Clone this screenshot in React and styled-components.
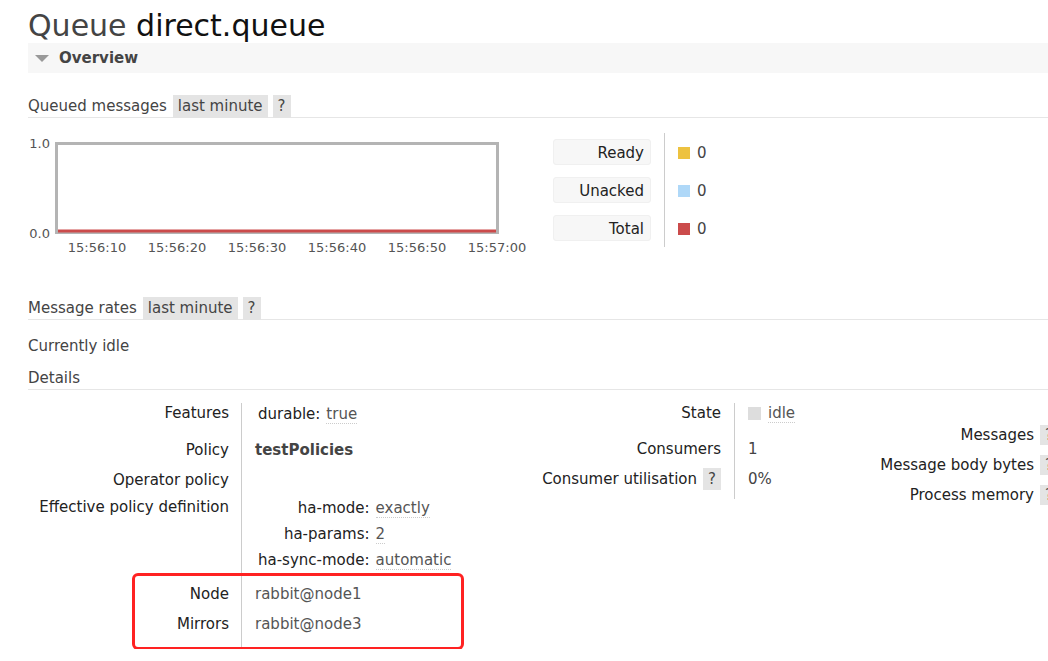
import React from 'react';
import styled, { createGlobalStyle } from 'styled-components';

const Global = createGlobalStyle`
  html, body { margin: 0; padding: 0; background: #fff; overflow: hidden; }
  body {
    font-family: "DejaVu Sans", Verdana, sans-serif;
    font-size: 15px;
    color: #444;
  }
  * { box-sizing: border-box; }
`;

const Page = styled.div`
  padding-left: 28px;
  width: 1048px;
`;

const Title = styled.h1`
  margin: 8px 0 0;
  font-size: 30px;
  font-weight: normal;
  line-height: 35px;
  color: #444;
  white-space: nowrap;
`;

const TitleName = styled.span`
  color: #111;
`;

const SectionBar = styled.div`
  height: 30px;
  background: #f7f7f7;
  display: flex;
  align-items: center;
  gap: 10px;
  padding-left: 7px;
  font-weight: bold;
  color: #444;
`;

const Caret = styled.span`
  width: 0;
  height: 0;
  border-left: 7px solid transparent;
  border-right: 7px solid transparent;
  border-top: 7px solid #999;
`;

const SubHeading = styled.div`
  display: flex;
  align-items: center;
  height: 24px;
  padding-top: 1px;
  border-bottom: 1px solid #e6e6e6;
  margin-top: ${(p) => p.$mt}px;
  color: #444;
  white-space: nowrap;
`;

const Pill = styled.span`
  display: inline-block;
  background: #e4e4e4;
  height: 23px;
  line-height: 23px;
  padding: 0 5px;
  margin-left: ${(p) => p.$ml ?? 5}px;
  color: #444;
`;

const HelpBox = styled.span`
  display: inline-block;
  flex: none;
  background: #e4e4e4;
  height: ${(p) => p.$h ?? 22}px;
  line-height: ${(p) => p.$h ?? 22}px;
  padding: 0 5px;
  margin-left: 6px;
  color: #444;
`;

const ChartRow = styled.div`
  display: flex;
  margin-top: 15px;
  height: 122px;
`;

const ChartGrid = styled.div`
  display: grid;
  grid-template-columns: 27px 480px;
  grid-template-rows: 92px 16px;
  row-gap: 6px;
  margin-top: 9px;
  width: 525px;
  font-size: 13px;
  color: #545454;
`;

const YAxis = styled.div`
  display: flex;
  flex-direction: column;
  justify-content: space-between;
  align-items: flex-end;
  padding-right: 5px;
  margin: -6px 0 -8px;
  line-height: 16px;
`;

const XAxis = styled.div`
  grid-column: 2;
  display: flex;
  margin-left: 2px;
  line-height: 16px;
`;

const Tick = styled.span`
  flex: none;
  width: 80px;
  text-align: center;
`;

const Legend = styled.div`
  display: grid;
  grid-template-columns: 111px auto;
  grid-auto-rows: 38px;
`;

const LegendLabel = styled.div`
  width: 98px;
  height: 26px;
  margin-top: 6px;
  line-height: 26px;
  text-align: right;
  padding-right: 6px;
  background: #f7f7f7;
  border: 1px solid #f0f0f0;
  border-radius: 3px;
  color: #222;
`;

const LegendValue = styled.div`
  border-left: 1px solid #ccc;
  padding-left: 13px;
  display: flex;
  align-items: center;
  gap: 7px;
  padding-top: 2px;
`;

const Swatch = styled.span`
  width: ${(p) => p.$s ?? 12}px;
  height: ${(p) => p.$s ?? 12}px;
  background: ${(p) => p.$c};
  flex: none;
`;

const Plain = styled.div`
  margin-top: ${(p) => p.$mt}px;
  line-height: 20px;
  padding-top: 1px;
  color: #444;
`;

const Tables = styled.div`
  display: flex;
  margin-top: 13px;
  white-space: nowrap;
`;

const DetailTable = styled.div`
  position: relative;
  width: ${(p) => p.$w}px;
  padding-top: ${(p) => p.$pt ?? 0}px;
  flex: none;
`;

const Row = styled.div`
  display: flex;
  align-items: flex-start;
  height: ${(p) => p.$h}px;
`;

const Label = styled.div`
  flex: none;
  width: ${(p) => p.$w}px;
  height: 20px;
  line-height: 20px;
  padding-right: ${(p) => p.$pr ?? 12}px;
  display: flex;
  justify-content: flex-end;
  align-items: center;
  color: #222;
`;

const Value = styled.div`
  flex: 1;
  align-self: stretch;
  border-left: 1px solid #ccc;
  padding-left: 13px;
  line-height: 20px;
  color: ${(p) => p.$c ?? '#444'};
  font-weight: ${(p) => (p.$bold ? 'bold' : 'normal')};
`;

const KV = styled.div`
  display: grid;
  grid-template-columns: auto auto;
  grid-auto-rows: 18px;
  column-gap: 6px;
  row-gap: 8px;
  margin-left: 3px;
  padding-top: 1px;
  justify-content: start;
`;

const KVKey = styled.span`
  text-align: right;
  color: #222;
`;

const Abbr = styled.span`
  justify-self: start;
  align-self: start;
  padding-top: 2px;
  line-height: 17px;
  color: #555;
  border-bottom: 1px dotted #ccc;
`;

const StateValue = styled.div`
  display: flex;
  align-items: center;
  gap: 7px;
`;

const Annotation = styled.div`
  position: absolute;
  left: 104px;
  top: 170px;
  width: 332px;
  height: 77px;
  border: 3px solid #ff2222;
  border-radius: 6px;
  pointer-events: none;
`;

function ChartFrame() {
  return (
    <svg width="446" height="94" viewBox="0 0 446 94" style={{ display: 'block' }}>
      <rect x="1.5" y="1.5" width="441" height="89" fill="#fff" stroke="#b4b4b4" strokeWidth="3" />
      <line x1="3" y1="89" x2="441" y2="89" stroke="#cb4b4b" strokeWidth="3" />
    </svg>
  );
}

const ticks = ['15:56:10', '15:56:20', '15:56:30', '15:56:40', '15:56:50', '15:57:00'];
const legend = [
  ['Ready', '#edc240'],
  ['Unacked', '#afd8f8'],
  ['Total', '#cb4b4b'],
];
const memoryRows = ['Messages', 'Message body bytes', 'Process memory'];

export default function App() {
  return (
    <>
      <Global />
      <Page>
        <Title>
          Queue <TitleName>direct.queue</TitleName>
        </Title>
        <SectionBar>
          <Caret />
          Overview
        </SectionBar>

        <SubHeading $mt={21}>
          Queued messages
          <Pill $ml={6}>last minute</Pill>
          <Pill>?</Pill>
        </SubHeading>

        <ChartRow>
          <ChartGrid>
            <YAxis>
              <span>1.0</span>
              <span>0.0</span>
            </YAxis>
            <ChartFrame />
            <XAxis>
              {ticks.map((t) => (
                <Tick key={t}>{t}</Tick>
              ))}
            </XAxis>
          </ChartGrid>
          <Legend>
            {legend.map(([name, color]) => (
              <React.Fragment key={name}>
                <LegendLabel>{name}</LegendLabel>
                <LegendValue>
                  <Swatch $c={color} />
                  0
                </LegendValue>
              </React.Fragment>
            ))}
          </Legend>
        </ChartRow>

        <SubHeading $mt={41}>
          Message rates
          <Pill $ml={6}>last minute</Pill>
          <Pill>?</Pill>
        </SubHeading>

        <Plain $mt={15}>Currently idle</Plain>

        <SubHeading $mt={10}>Details</SubHeading>

        <Tables>
          <DetailTable $w={500}>
            <Row $h={37}>
              <Label $w={213}>Features</Label>
              <Value>
                <KV>
                  <KVKey>durable:</KVKey>
                  <Abbr>true</Abbr>
                </KV>
              </Value>
            </Row>
            <Row $h={30}>
              <Label $w={213}>Policy</Label>
              <Value $bold>testPolicies</Value>
            </Row>
            <Row $h={27}>
              <Label $w={213}>Operator policy</Label>
              <Value />
            </Row>
            <Row $h={87}>
              <Label $w={213}>Effective policy definition</Label>
              <Value>
                <KV>
                  <KVKey>ha-mode:</KVKey>
                  <Abbr>exactly</Abbr>
                  <KVKey>ha-params:</KVKey>
                  <Abbr>2</Abbr>
                  <KVKey>ha-sync-mode:</KVKey>
                  <Abbr>automatic</Abbr>
                </KV>
              </Value>
            </Row>
            <Row $h={30}>
              <Label $w={213}>Node</Label>
              <Value $c="#555">rabbit@node1</Value>
            </Row>
            <Row $h={35}>
              <Label $w={213}>Mirrors</Label>
              <Value $c="#555">rabbit@node3</Value>
            </Row>
            <Annotation />
          </DetailTable>

          <DetailTable $w={327}>
            <Row $h={36}>
              <Label $w={206} $pr={13}>State</Label>
              <Value>
                <StateValue>
                  <Swatch $c="#ddd" $s={13} />
                  <Abbr>idle</Abbr>
                </StateValue>
              </Value>
            </Row>
            <Row $h={30}>
              <Label $w={206} $pr={13}>Consumers</Label>
              <Value>1</Value>
            </Row>
            <Row $h={30}>
              <Label $w={206} $pr={13}>
                Consumer utilisation
                <HelpBox>?</HelpBox>
              </Label>
              <Value>0%</Value>
            </Row>
          </DetailTable>

          <DetailTable $w={240} $pt={22}>
            {memoryRows.map((r) => (
              <Row key={r} $h={30}>
                <Label $w={179} $pr={0}>{r}</Label>
                <HelpBox $h={20}>?</HelpBox>
              </Row>
            ))}
          </DetailTable>
        </Tables>
      </Page>
    </>
  );
}
